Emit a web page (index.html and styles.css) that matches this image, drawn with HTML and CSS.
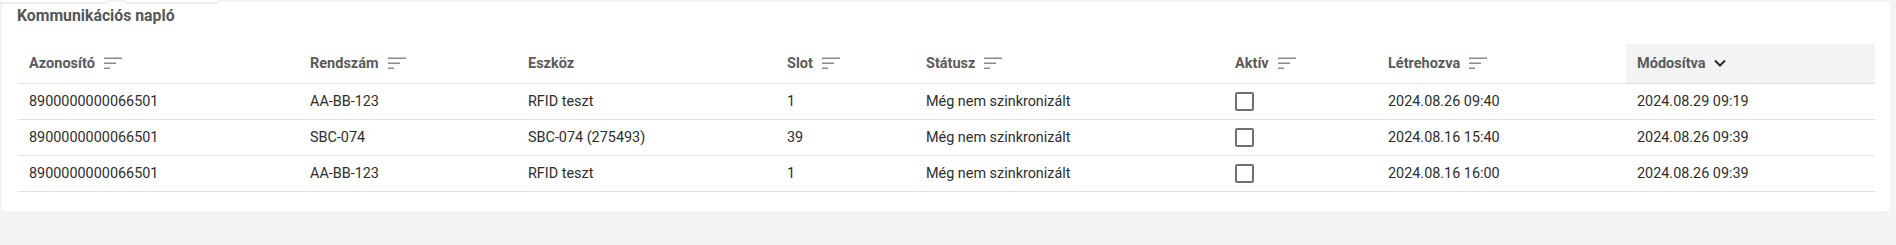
FILE: index.html
```html
<!DOCTYPE html>
<html lang="hu">
<head>
<meta charset="utf-8">
<title>Kommunikációs napló</title>
<link rel="stylesheet" href="styles.css">
</head>
<body>
<div class="tabstrip">
  <div class="tab tab-a"></div>
  <div class="tab tab-b"></div>
</div>
<section class="card">
  <h2 class="title">Kommunikációs napló</h2>
  <table class="grid">
    <colgroup>
      <col class="c1"><col class="c2"><col class="c3"><col class="c4"><col class="c5"><col class="c6"><col class="c7"><col class="c8">
    </colgroup>
    <thead>
      <tr>
        <th><span class="th-in">Azonosító<svg class="sort" viewBox="0 0 24 24"><path d="M3 7.25h18M3 12.25h12M3 17.25h6"/></svg></span></th>
        <th><span class="th-in">Rendszám<svg class="sort" viewBox="0 0 24 24"><path d="M3 7.25h18M3 12.25h12M3 17.25h6"/></svg></span></th>
        <th><span class="th-in">Eszköz</span></th>
        <th><span class="th-in">Slot<svg class="sort" viewBox="0 0 24 24"><path d="M3 7.25h18M3 12.25h12M3 17.25h6"/></svg></span></th>
        <th><span class="th-in">Státusz<svg class="sort" viewBox="0 0 24 24"><path d="M3 7.25h18M3 12.25h12M3 17.25h6"/></svg></span></th>
        <th><span class="th-in">Aktív<svg class="sort" viewBox="0 0 24 24"><path d="M3 7.25h18M3 12.25h12M3 17.25h6"/></svg></span></th>
        <th><span class="th-in">Létrehozva<svg class="sort" viewBox="0 0 24 24"><path d="M3 7.25h18M3 12.25h12M3 17.25h6"/></svg></span></th>
        <th class="sorted"><span class="th-in">Módosítva<svg class="chev" viewBox="0 0 24 24"><path d="M7 9.5l5 5 5-5"/></svg></span></th>
      </tr>
    </thead>
    <tbody>
      <tr>
        <td>8900000000066501</td>
        <td>AA-BB-123</td>
        <td>RFID teszt</td>
        <td>1</td>
        <td>Még nem szinkronizált</td>
        <td><span class="checkbox"></span></td>
        <td>2024.08.26 09:40</td>
        <td>2024.08.29 09:19</td>
      </tr>
      <tr>
        <td>8900000000066501</td>
        <td>SBC-074</td>
        <td>SBC-074 (275493)</td>
        <td>39</td>
        <td>Még nem szinkronizált</td>
        <td><span class="checkbox"></span></td>
        <td>2024.08.16 15:40</td>
        <td>2024.08.26 09:39</td>
      </tr>
      <tr>
        <td>8900000000066501</td>
        <td>AA-BB-123</td>
        <td>RFID teszt</td>
        <td>1</td>
        <td>Még nem szinkronizált</td>
        <td><span class="checkbox"></span></td>
        <td>2024.08.16 16:00</td>
        <td>2024.08.26 09:39</td>
      </tr>
    </tbody>
  </table>
</section>
</body>
</html>
```
FILE: styles.css
```css
* { box-sizing: border-box; }
html, body {
  margin: 0;
  padding: 0;
  background: #f3f3f3;
  font-family: Roboto, "Liberation Sans", Arial, sans-serif;
  color: #333;
}
.tabstrip {
  display: flex;
  height: 2px;
}
.tab {
  height: 2px;
  background: #fff;
  box-shadow: 0 1px 3px rgba(0,0,0,0.18);
}
.tab-a { width: 107px; }
.tab-b { width: 93px; margin-left: 18px; }
.card {
  margin-left: 2px;
  width: 1888px;
  background: #fff;
  border-radius: 0 0 4px 4px;
  padding: 4px 15px 19px 16px;
}
.title {
  margin: 0 0 18px -1px;
  font-size: 15.8px;
  line-height: 20px;
  font-weight: 700;
  color: #575757;
}
.grid {
  width: 1857px;
  border-collapse: collapse;
  table-layout: fixed;
  font-size: 14.4px;
}
.c1 { width: 281px; }
.c2 { width: 218px; }
.c3 { width: 259px; }
.c4 { width: 139px; }
.c5 { width: 309px; }
.c6 { width: 153px; }
.c7 { width: 249px; }
.c8 { width: 249px; }
.grid th {
  height: 39px;
  padding: 0 11px;
  text-align: left;
  font-size: 14.5px;
  font-weight: 700;
  color: #5b5b5b;
  border-bottom: 1px solid #e0e0e0;
  vertical-align: middle;
}
.grid th.sorted { background: #f3f3f3; }
.th-in {
  display: inline-flex;
  align-items: center;
  gap: 6px;
}
.sort {
  width: 24px;
  height: 24px;
  fill: none;
  stroke: #8a8a8a;
  stroke-width: 1.5;
}
.chev {
  width: 24px;
  height: 24px;
  margin-left: -4px;
  fill: none;
  stroke: #2a2a2a;
  stroke-width: 2;
}
.grid td {
  height: 36px;
  padding: 0 11px;
  color: #2e2e2e;
  border-bottom: 1px solid #e0e0e0;
  vertical-align: middle;
  white-space: nowrap;
}
.checkbox {
  display: block;
  width: 19px;
  height: 19px;
  border: 2px solid #707070;
  border-radius: 2px;
}
```
